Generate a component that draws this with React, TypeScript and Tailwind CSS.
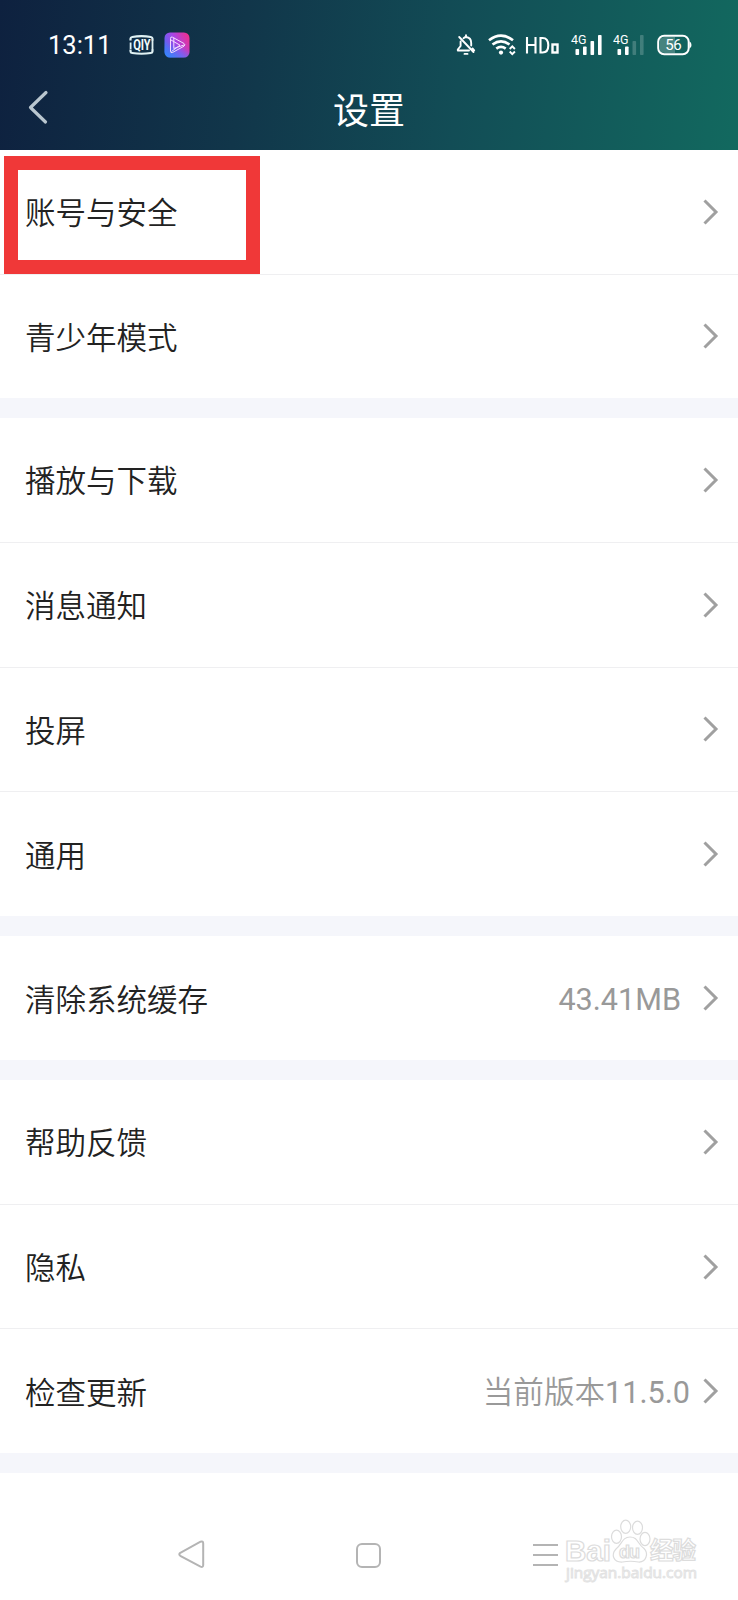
import React from "react";

type Item = {
  label: string;
  prefix?: string;
  value?: string;
  valueGap?: string;
};

const groups: Item[][] = [
  [{ label: "账号与安全" }, { label: "青少年模式" }],
  [{ label: "播放与下载" }, { label: "消息通知" }, { label: "投屏" }, { label: "通用" }],
  [{ label: "清除系统缓存", value: "43.41MB", valueGap: "mr-[21px]" }],
  [
    { label: "帮助反馈" },
    { label: "隐私" },
    { label: "检查更新", prefix: "当前版本", value: "11.5.0", valueGap: "mr-[12px]" },
  ],
];

const QiyIcon = () => (
  <svg width="25" height="20" viewBox="0 0 25 20" fill="none" className="ml-[17px]">
    <path d="M1.500 5.500V3.800Q1.500 2.300 3.200 2Q12.500 .2 21.800 2Q23.500 2.300 23.500 3.800V5.500M1.500 14.500V16.200Q1.500 17.700 3.200 18Q12.500 19.500 21.800 18Q23.500 17.700 23.500 16.200V14.500" stroke="#dff1f3" strokeWidth="2.200" />
    <path d="M1.600 7.500V14M23.500 5V15" stroke="#dff1f3" strokeWidth="1.800" />
    <text x="4.200" y="15" fontFamily="Roboto, sans-serif" fontSize="14" fontWeight="700" fill="#f2fbfb" textLength="17.500" lengthAdjust="spacingAndGlyphs">QIY</text>
  </svg>
);

const VideoAppIcon = () => (
  <svg width="26" height="26" viewBox="0 0 26 26" fill="none" className="ml-[10px]">
    <defs>
      <linearGradient id="app" x1="0" y1="18" x2="26" y2="6" gradientUnits="userSpaceOnUse">
        <stop offset="0" stopColor="#4b6cf5" />
        <stop offset=".5" stopColor="#a845e6" />
        <stop offset="1" stopColor="#ee2f8e" />
      </linearGradient>
      <linearGradient id="appGlow" x1="8" y1="26" x2="13" y2="13" gradientUnits="userSpaceOnUse">
        <stop offset="0" stopColor="#2f8dff" stopOpacity=".7" />
        <stop offset="1" stopColor="#2f8dff" stopOpacity="0" />
      </linearGradient>
    </defs>
    <rect x=".5" y=".5" width="25" height="25" rx="5.500" fill="url(#app)" />
    <rect x=".5" y=".5" width="25" height="25" rx="5.500" fill="url(#appGlow)" />
    <path d="M6.500 6.500Q6.500 4.300 8.500 5.200L20 11.500Q21.800 12.800 20 14.200L8.500 20.500Q6.500 21.300 6.500 19.200ZM9.800 5.800V16.500L20.500 12.800M7 8L16 13.200L7.500 19.500" stroke="#f4dcff" strokeWidth="1" strokeLinejoin="round" />
  </svg>
);

const BellOffIcon = () => (
  <svg width="20" height="22" viewBox="0 0 20 22" fill="none" stroke="#fff" strokeWidth="1.900" strokeLinecap="round" strokeLinejoin="round">
    <path d="M7.500 4.200Q9 3 10 3Q15.200 3.500 15.200 9V11.500M4.600 7.500V12L1.800 15.500V16.500H13M16.500 14.500L18.200 16.300M10 1.200V2.800M3.200 3L17.500 18" />
    <path d="M8.500 19.900H11.500" />
  </svg>
);

const WifiIcon = () => (
  <svg width="28" height="22" viewBox="0 0 28 22" fill="none" className="ml-[12px]">
    <path d="M1 6.200Q13 -3 25 6.200M4.500 10.500Q13 4.200 21.500 10.500M8.300 14.600Q13 11.200 17.700 14.600" stroke="#fff" strokeWidth="2.700" />
    <circle cx="13" cy="18.600" r="2.100" fill="#fff" />
    <path d="M21.700 15L24.300 12.400L26.900 15M21.700 17.500L24.300 20.100L26.900 17.500" stroke="#fff" strokeWidth="1.900" />
  </svg>
);

const HdIcon = () => (
  <svg width="35" height="22" viewBox="0 0 35 22" fill="none" className="ml-[9px]">
    <path d="M2 3V19.500M2 11H10.500M10.500 3V19.500M15.500 4V18.500H17.500Q23.300 18.500 23.300 11.200Q23.300 4 17.500 4H15.500Z" stroke="#fff" strokeWidth="2.100" />
    <rect x="27.500" y="10.500" width="5" height="8" stroke="#fff" strokeWidth="2.400" />
  </svg>
);

const SignalIcon = ({ weak }: { weak?: boolean }) => (
  <svg width="32" height="28" viewBox="0 -3 32 28">
    <text x="0" y="10.300" fontFamily="Roboto, sans-serif" fontSize="13.500" fill="#fff" textLength="15.500" lengthAdjust="spacingAndGlyphs">4G</text>
    <rect x="4.500" y="15" width="3.600" height="6" rx=".8" fill="#fff" />
    <rect x="12" y="12.500" width="3.600" height="8.500" rx=".8" fill="#fff" />
    <rect x="19.500" y="7" width="3.600" height="14" rx=".8" fill="#fff" opacity={weak ? 0.2 : 1} />
    <rect x="27" y="1" width="3.600" height="20" rx=".8" fill="#fff" opacity={weak ? 0.2 : 1} />
  </svg>
);

const BatteryIcon = () => (
  <svg width="35" height="22" viewBox="0 0 35 22" fill="none" className="ml-[12px]">
    <path d="M3 5Q5 3 8 3H18V19H8Q5 19 3 17Z" fill="#fff" opacity=".22" />
    <rect x="1.200" y="1.800" width="30.500" height="18.400" rx="6" stroke="#fff" strokeWidth="2" />
    <path d="M32.500 7.500Q34.500 8 34.500 11Q34.500 14 32.500 14.500Z" fill="#fff" />
    <text x="8.300" y="16.200" fontFamily="Roboto, sans-serif" fontSize="15" fill="#fff" textLength="16.500">56</text>
  </svg>
);

const Chevron = () => (
  <svg width="17" height="26" viewBox="0 0 17 26" fill="none" stroke="#a0a0a0" strokeWidth="3">
    <path d="M2.500 1.500L14 13L2.500 24.500" />
  </svg>
);

const Watermark = () => (
  <svg width="136" height="74" viewBox="0 0 136 74" fill="#fff" stroke="#dcdcdc" strokeWidth="1.200" className="absolute left-[564px] top-[42px]">
    <text x="1" y="45.500" fontFamily="Liberation Sans, sans-serif" fontSize="29" fontWeight="700" textLength="46" lengthAdjust="spacingAndGlyphs">Bai</text>
    <ellipse cx="52.500" cy="21.700" rx="5" ry="6.600" />
    <ellipse cx="61.700" cy="11.700" rx="5" ry="6.600" />
    <ellipse cx="73.500" cy="12.700" rx="5" ry="6.600" />
    <ellipse cx="81" cy="24" rx="5" ry="6.600" />
    <path d="M66 22C74 22 73 28.500 80 33.500C85 38.500 82 47.500 74.500 47C69 46 64 46 58.500 47C49 47.500 47 39.500 52 34C58 29.500 58 22 66 22Z" />
    <text x="55" y="43" fontFamily="Liberation Sans, sans-serif" fontSize="18" fontWeight="700" textLength="21">du</text>
    <text x="86" y="44" fontFamily="Noto Sans CJK SC, sans-serif" fontSize="23.500" fontWeight="700" textLength="46">经验</text>
    <text x="2" y="63" fontFamily="Open Sans, sans-serif" fontSize="14" stroke="#e2e2e2" strokeWidth=".9" textLength="131" lengthAdjust="spacingAndGlyphs">jingyan.baidu.com</text>
  </svg>
);

const Row = ({ item, last }: { item: Item; last: boolean }) => (
  <div className={`flex flex-1 items-center pl-[25px] pr-[19px] ${last ? "" : "border-b border-[#efeff1]"}`}>
    <span className="flex-1 pt-[5px] text-[30.5px] font-[350] leading-[44px] text-[#222]">{item.label}</span>
    {item.value && (
      <span className={`pt-[4px] text-[30.6px] leading-[44px] text-[#999] ${item.valueGap}`}>
        {item.prefix && <span className="font-[350]">{item.prefix}</span>}
        {item.value}
      </span>
    )}
    <Chevron />
  </div>
);

const groupHeights = ["h-[248px]", "h-[498px]", "h-[124px]", "h-[373px]"];

export default function App() {
  return (
    <div className="relative flex h-[1600px] w-[738px] flex-col overflow-hidden bg-white font-[Roboto,'Noto_Sans_CJK_SC',sans-serif]">
      <header className="h-[150px] bg-[linear-gradient(97deg,#0e213f_0%,#11364a_33%,#124d56_62%,#12695f_100%)]">
        <div className="flex h-[90px] items-center pl-[48px] pr-[46px] text-white">
          <span className="text-[25.5px] leading-[30px]">13:11</span>
          <QiyIcon />
          <VideoAppIcon />
          <div className="ml-auto flex items-center">
            <BellOffIcon />
            <WifiIcon />
            <HdIcon />
            <div className="ml-[11px] flex gap-[10px]">
              <SignalIcon />
              <SignalIcon weak />
            </div>
            <BatteryIcon />
          </div>
        </div>
        <div className="grid h-[60px] grid-cols-[1fr_auto_1fr] items-start">
          <svg width="24" height="36" viewBox="0 0 24 36" fill="none" stroke="#b9c6cf" strokeWidth="3.200" strokeLinecap="round" strokeLinejoin="round" className="ml-[27px]">
            <path d="M19 2.500L3.500 17.500L18.500 32" />
          </svg>
          <h1 className="pt-[2px] text-[36px] leading-[40px] text-white">设置</h1>
        </div>
      </header>

      <main className="flex flex-col gap-[20px] bg-[#f5f6fb] pb-[20px]">
        {groups.map((items, i) => (
          <section key={items[0].label} className={`flex flex-col bg-white ${groupHeights[i]}`}>
            {items.map((item, j) => (
              <Row key={item.label} item={item} last={j === items.length - 1} />
            ))}
          </section>
        ))}
      </main>

      <nav className="relative flex-1">
        <div className="flex items-center pl-[177px] pt-[67px]">
          <svg width="29" height="30" viewBox="0 0 29 30" fill="none" stroke="#b4b4b4" strokeWidth="2">
            <path d="M3.300 12.800L23.500 1.700Q26.200 .8 26.200 3.500V25Q26.200 27.700 23.500 26.600L3.300 15.800Q1.300 14.300 3.300 12.800Z" />
          </svg>
          <div className="ml-[150px] size-[25px] rounded-[6px] border-2 border-[#b4b4b4]" />
          <div className="ml-[152px] flex w-[25px] flex-col gap-[8px]">
            <div className="h-[2px] bg-[#b4b4b4]" />
            <div className="h-[2px] bg-[#b4b4b4]" />
            <div className="h-[2px] bg-[#b4b4b4]" />
          </div>
        </div>
        <Watermark />
      </nav>

      {/* highlight frame over the first row */}
      <div className="absolute left-[4px] top-[156px] h-[118px] w-[256px] border-[14px] border-[#f03838]" />
    </div>
  );
}
